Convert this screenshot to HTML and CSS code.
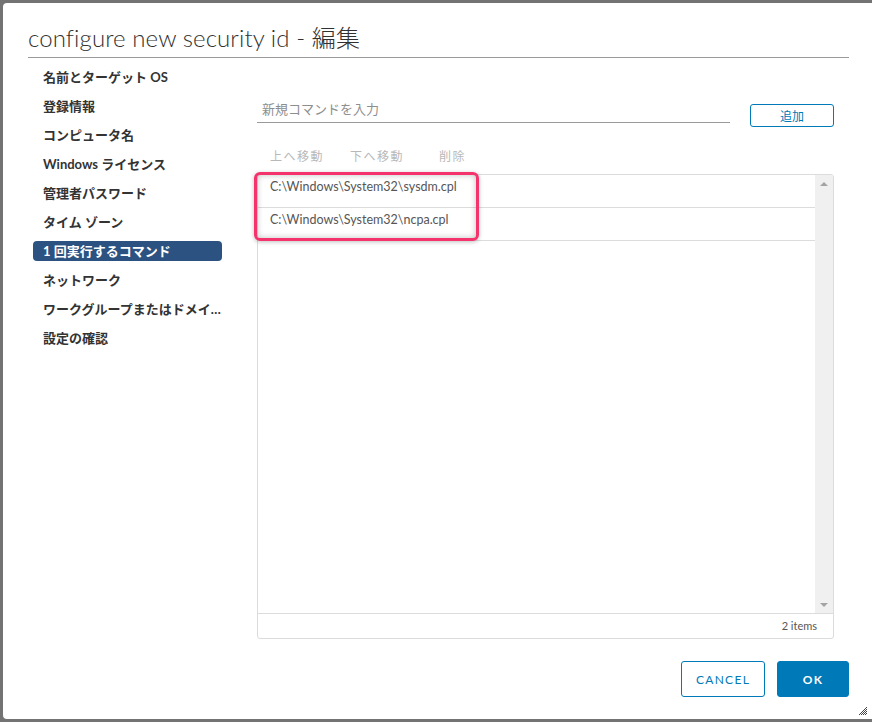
FILE: index.html
```html
<!DOCTYPE html>
<html lang="ja">
<head>
<meta charset="utf-8">
<title>configure new security id - 編集</title>
<link rel="stylesheet" href="styles.css">
</head>
<body>
<div class="dialog">
  <div class="header">
    <h1 class="title">configure new security id - 編集</h1>
  </div>
  <div class="body">
    <nav class="nav">
      <div class="nav-item">名前とターゲット OS</div>
      <div class="nav-item">登録情報</div>
      <div class="nav-item">コンピュータ名</div>
      <div class="nav-item">Windows ライセンス</div>
      <div class="nav-item">管理者パスワード</div>
      <div class="nav-item">タイム ゾーン</div>
      <div class="nav-item active">1 回実行するコマンド</div>
      <div class="nav-item">ネットワーク</div>
      <div class="nav-item" title="ワークグループまたはドメイン">ワークグループまたはドメイ…</div>
      <div class="nav-item">設定の確認</div>
    </nav>
    <main class="content">
      <div class="input-row">
        <div class="input-field"><span class="placeholder">新規コマンドを入力</span></div>
        <button class="btn-add">追加</button>
      </div>
      <div class="toolbar">
        <span class="tool t1">上へ移動</span>
        <span class="tool t2">下へ移動</span>
        <span class="tool t3">削除</span>
      </div>
      <div class="grid">
        <div class="grid-main">
          <div class="rows">
            <div class="row">C:\Windows\System32\sysdm.cpl</div>
            <div class="row">C:\Windows\System32\ncpa.cpl</div>
          </div>
          <div class="scrollbar">
            <span class="arrow up"></span>
            <span class="arrow down"></span>
          </div>
        </div>
        <div class="grid-footer">2 items</div>
        <div class="highlight"></div>
      </div>
    </main>
  </div>
  <div class="footer">
    <button class="btn btn-outline">CANCEL</button>
    <button class="btn btn-primary">OK</button>
  </div>
  <svg class="resize" width="10" height="10" viewBox="0 0 10 10">
    <path d="M9 1L1 9M9 3L3 9M9 5L5 9M9 7L7 9" stroke="#444" stroke-width="1"/>
  </svg>
</div>
</body>
</html>
```
FILE: styles.css
```css
* { box-sizing: border-box; }
html, body { margin: 0; padding: 0; }
body {
  background: #737373;
  width: 872px;
  height: 722px;
  overflow: hidden;
  font-family: Lato, "Noto Sans CJK JP", sans-serif;
  color: #333;
}
.dialog {
  position: relative;
  margin: 3px 0 0 3px;
  width: 869px;
  height: 716px;
  background: #fff;
  border-radius: 4px 0 0 4px;
  padding: 0 23px 0 25px;
  display: flex;
  flex-direction: column;
}
.header {
  padding-top: 19px;
  border-bottom: 1px solid #9a9a9a;
  padding-bottom: 4px;
}
.title {
  margin: 0;
  font-size: 24px;
  line-height: 31px;
  font-weight: 300;
  color: #313131;
  letter-spacing: 0.1px;
}
.body {
  display: flex;
  flex: 1;
}
.nav {
  width: 189px;
  margin-left: 5px;
  padding-top: 9px;
  display: flex;
  flex-direction: column;
  gap: 9px;
}
.nav-item {
  height: 20px;
  line-height: 20px;
  padding-left: 10px;
  font-size: 13px;
  font-weight: 700;
  color: #333;
  white-space: nowrap;
  border-radius: 4px;
}
.nav-item.active {
  background: #2b5281;
  color: #fff;
}
.content {
  margin-left: 35px;
  width: 577px;
  padding-top: 42px;
  display: flex;
  flex-direction: column;
}
.input-row {
  display: flex;
  align-items: flex-start;
  gap: 20px;
}
.input-field {
  width: 473px;
  height: 23px;
  border-bottom: 1px solid #9a9a9a;
  padding-left: 5px;
  line-height: 15px;
}
.placeholder {
  font-size: 13px;
  color: #8e8e8e;
}
.btn-add {
  margin-top: 4px;
  width: 84px;
  height: 23px;
  border: 1px solid #0079b8;
  border-radius: 3px;
  background: #fff;
  color: #0079b8;
  font-family: Lato, "Noto Sans CJK JP", sans-serif;
  font-size: 12px;
  padding: 0;
}
.toolbar {
  margin-top: 20px;
  height: 20px;
  line-height: 20px;
  display: flex;
  font-size: 12px;
  color: #b8b8b8;
  letter-spacing: 1.5px;
  margin-bottom: 7px;
}
.tool.t1 { margin-left: 13px; }
.tool.t2 { margin-left: 26px; }
.tool.t3 { margin-left: 35px; }
.grid {
  position: relative;
  height: 465px;
  border: 1px solid #dcdcdc;
  border-radius: 3px;
  display: flex;
  flex-direction: column;
}
.grid-main {
  flex: 1;
  display: flex;
  border-bottom: 1px solid #dcdcdc;
}
.rows {
  flex: 1;
}
.row {
  height: 33px;
  border-bottom: 1px solid #dcdcdc;
  padding-left: 12px;
  line-height: 24px;
  font-size: 12.5px;
  color: #565656;
}
.scrollbar {
  width: 18px;
  background: #f0f0f0;
  display: flex;
  flex-direction: column;
  justify-content: space-between;
  align-items: center;
  padding: 7px 0 6px;
}
.arrow {
  width: 0;
  height: 0;
  border-left: 4px solid transparent;
  border-right: 4px solid transparent;
}
.arrow.up { border-bottom: 4px solid #a3a3a3; }
.arrow.down { border-top: 4px solid #a3a3a3; }
.grid-footer {
  height: 24px;
  line-height: 24px;
  text-align: right;
  padding-right: 16px;
  font-size: 11px;
  color: #565656;
}
.highlight {
  position: absolute;
  left: -4px;
  top: -3px;
  width: 225px;
  height: 69px;
  border: 3px solid #f4336d;
  border-radius: 6px;
  box-shadow: inset 0 0 6px rgba(0,0,0,0.25), 0 1px 4px rgba(0,0,0,0.25);
}
.footer {
  display: flex;
  justify-content: flex-end;
  gap: 12px;
  padding-top: 22px;
  padding-bottom: 22px;
}
.btn {
  height: 36px;
  border-radius: 3px;
  font-family: Lato, "Noto Sans CJK JP", sans-serif;
  font-size: 12px;
  letter-spacing: 1.3px;
  padding: 0;
}
.btn-outline {
  width: 84px;
  background: #fff;
  border: 1px solid #0079b8;
  color: #0079b8;
}
.btn-primary {
  width: 72px;
  background: #0079b8;
  border: 1px solid #0079b8;
  color: #fff;
  font-weight: 700;
}
.resize {
  position: absolute;
  right: 4px;
  bottom: 3px;
}
```
